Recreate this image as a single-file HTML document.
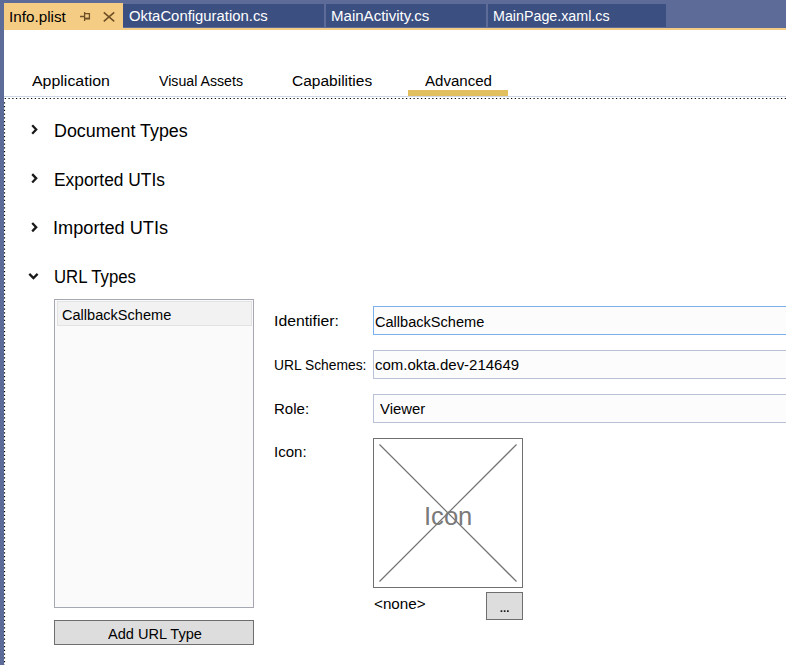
<!DOCTYPE html>
<html><head><meta charset="utf-8">
<style>
html,body{margin:0;padding:0;}
body{width:786px;height:665px;overflow:hidden;position:relative;background:#fff;font-family:"Liberation Sans",sans-serif;color:#000;}
.a{position:absolute;}
.t{position:absolute;white-space:pre;line-height:1;transform-origin:0 0;}
</style></head><body>
<!-- frame -->
<div class="a" style="left:0;top:0;width:786px;height:28px;background:#5d6b99"></div>
<div class="a" style="left:0;top:0;width:4px;height:665px;background:#5d6b99"></div>
<!-- tabs -->
<div class="a" style="left:4px;top:3px;width:119px;height:27px;background:#f5cc84"></div>
<div class="a" style="left:123px;top:4px;width:201px;height:23px;background:#3c4f81"></div>
<div class="a" style="left:326px;top:4px;width:160px;height:23px;background:#3c4f81"></div>
<div class="a" style="left:488px;top:4px;width:178px;height:23px;background:#3c4f81"></div>
<div class="a" style="left:4px;top:28px;width:782px;height:2px;background:#f5cc84"></div>
<div class="t" style="left:9.02px;top:8.83px;font-size:15.5px;transform:scaleX(0.9834)">Info.plist</div>
<svg class="a" style="left:0;top:0" width="120" height="30" viewBox="0 0 120 30">
  <path d="M80 16.5H84.5M84.6 12V21M84.6 13.6H89.4V18.6H84.6" fill="none" stroke="#6f4f25" stroke-width="1.3"/>
  <rect x="84.6" y="17.6" width="5.4" height="1.8" fill="#6f4f25"/>
</svg>
<svg class="a" style="left:0;top:0" width="120" height="30" viewBox="0 0 120 30">
  <path d="M103.8 12.4L114.2 21.4M114.2 12.4L103.8 21.4" fill="none" stroke="#6f4f25" stroke-width="1.6"/>
</svg>
<div class="t" style="left:129.04px;top:7.83px;font-size:15.5px;transform:scaleX(0.9589);color:#fff">OktaConfiguration.cs</div>
<div class="t" style="left:331.03px;top:7.83px;font-size:15.5px;transform:scaleX(0.9707);color:#fff">MainActivity.cs</div>
<div class="t" style="left:493.08px;top:7.83px;font-size:15.5px;transform:scaleX(0.9208);color:#fff">MainPage.xaml.cs</div>
<!-- sub tabs -->
<div class="t" style="left:32.00px;top:72.83px;font-size:15.5px;transform:scaleX(1.0272)">Application</div>
<div class="t" style="left:159.00px;top:72.83px;font-size:15.5px;transform:scaleX(0.9138)">Visual Assets</div>
<div class="t" style="left:292.00px;top:72.83px;font-size:15.5px;transform:scaleX(1.0005)">Capabilities</div>
<div class="t" style="left:425.00px;top:72.83px;font-size:15.5px;transform:scaleX(0.9713)">Advanced</div>
<div class="a" style="left:408px;top:90px;width:100px;height:6px;background:#e2c060"></div>
<div class="a" style="left:4px;top:96px;width:782px;height:1px;background:#cdd5e6"></div>
<svg class="a" style="left:0;top:0" width="786" height="665"><path fill="#000" d="M4.75 98h1.2v1.1h-1.2zM8.50 98h1.2v1.1h-1.2zM12.25 98h1.2v1.1h-1.2zM16.00 98h1.2v1.1h-1.2zM19.75 98h1.2v1.1h-1.2zM23.50 98h1.2v1.1h-1.2zM27.25 98h1.2v1.1h-1.2zM31.00 98h1.2v1.1h-1.2zM34.75 98h1.2v1.1h-1.2zM38.50 98h1.2v1.1h-1.2zM42.25 98h1.2v1.1h-1.2zM46.00 98h1.2v1.1h-1.2zM49.75 98h1.2v1.1h-1.2zM53.50 98h1.2v1.1h-1.2zM57.25 98h1.2v1.1h-1.2zM61.00 98h1.2v1.1h-1.2zM64.75 98h1.2v1.1h-1.2zM68.50 98h1.2v1.1h-1.2zM72.25 98h1.2v1.1h-1.2zM76.00 98h1.2v1.1h-1.2zM79.75 98h1.2v1.1h-1.2zM83.50 98h1.2v1.1h-1.2zM87.25 98h1.2v1.1h-1.2zM91.00 98h1.2v1.1h-1.2zM94.75 98h1.2v1.1h-1.2zM98.50 98h1.2v1.1h-1.2zM102.25 98h1.2v1.1h-1.2zM106.00 98h1.2v1.1h-1.2zM109.75 98h1.2v1.1h-1.2zM113.50 98h1.2v1.1h-1.2zM117.25 98h1.2v1.1h-1.2zM121.00 98h1.2v1.1h-1.2zM124.75 98h1.2v1.1h-1.2zM128.50 98h1.2v1.1h-1.2zM132.25 98h1.2v1.1h-1.2zM136.00 98h1.2v1.1h-1.2zM139.75 98h1.2v1.1h-1.2zM143.50 98h1.2v1.1h-1.2zM147.25 98h1.2v1.1h-1.2zM151.00 98h1.2v1.1h-1.2zM154.75 98h1.2v1.1h-1.2zM158.50 98h1.2v1.1h-1.2zM162.25 98h1.2v1.1h-1.2zM166.00 98h1.2v1.1h-1.2zM169.75 98h1.2v1.1h-1.2zM173.50 98h1.2v1.1h-1.2zM177.25 98h1.2v1.1h-1.2zM181.00 98h1.2v1.1h-1.2zM184.75 98h1.2v1.1h-1.2zM188.50 98h1.2v1.1h-1.2zM192.25 98h1.2v1.1h-1.2zM196.00 98h1.2v1.1h-1.2zM199.75 98h1.2v1.1h-1.2zM203.50 98h1.2v1.1h-1.2zM207.25 98h1.2v1.1h-1.2zM211.00 98h1.2v1.1h-1.2zM214.75 98h1.2v1.1h-1.2zM218.50 98h1.2v1.1h-1.2zM222.25 98h1.2v1.1h-1.2zM226.00 98h1.2v1.1h-1.2zM229.75 98h1.2v1.1h-1.2zM233.50 98h1.2v1.1h-1.2zM237.25 98h1.2v1.1h-1.2zM241.00 98h1.2v1.1h-1.2zM244.75 98h1.2v1.1h-1.2zM248.50 98h1.2v1.1h-1.2zM252.25 98h1.2v1.1h-1.2zM256.00 98h1.2v1.1h-1.2zM259.75 98h1.2v1.1h-1.2zM263.50 98h1.2v1.1h-1.2zM267.25 98h1.2v1.1h-1.2zM271.00 98h1.2v1.1h-1.2zM274.75 98h1.2v1.1h-1.2zM278.50 98h1.2v1.1h-1.2zM282.25 98h1.2v1.1h-1.2zM286.00 98h1.2v1.1h-1.2zM289.75 98h1.2v1.1h-1.2zM293.50 98h1.2v1.1h-1.2zM297.25 98h1.2v1.1h-1.2zM301.00 98h1.2v1.1h-1.2zM304.75 98h1.2v1.1h-1.2zM308.50 98h1.2v1.1h-1.2zM312.25 98h1.2v1.1h-1.2zM316.00 98h1.2v1.1h-1.2zM319.75 98h1.2v1.1h-1.2zM323.50 98h1.2v1.1h-1.2zM327.25 98h1.2v1.1h-1.2zM331.00 98h1.2v1.1h-1.2zM334.75 98h1.2v1.1h-1.2zM338.50 98h1.2v1.1h-1.2zM342.25 98h1.2v1.1h-1.2zM346.00 98h1.2v1.1h-1.2zM349.75 98h1.2v1.1h-1.2zM353.50 98h1.2v1.1h-1.2zM357.25 98h1.2v1.1h-1.2zM361.00 98h1.2v1.1h-1.2zM364.75 98h1.2v1.1h-1.2zM368.50 98h1.2v1.1h-1.2zM372.25 98h1.2v1.1h-1.2zM376.00 98h1.2v1.1h-1.2zM379.75 98h1.2v1.1h-1.2zM383.50 98h1.2v1.1h-1.2zM387.25 98h1.2v1.1h-1.2zM391.00 98h1.2v1.1h-1.2zM394.75 98h1.2v1.1h-1.2zM398.50 98h1.2v1.1h-1.2zM402.25 98h1.2v1.1h-1.2zM406.00 98h1.2v1.1h-1.2zM409.75 98h1.2v1.1h-1.2zM413.50 98h1.2v1.1h-1.2zM417.25 98h1.2v1.1h-1.2zM421.00 98h1.2v1.1h-1.2zM424.75 98h1.2v1.1h-1.2zM428.50 98h1.2v1.1h-1.2zM432.25 98h1.2v1.1h-1.2zM436.00 98h1.2v1.1h-1.2zM439.75 98h1.2v1.1h-1.2zM443.50 98h1.2v1.1h-1.2zM447.25 98h1.2v1.1h-1.2zM451.00 98h1.2v1.1h-1.2zM454.75 98h1.2v1.1h-1.2zM458.50 98h1.2v1.1h-1.2zM462.25 98h1.2v1.1h-1.2zM466.00 98h1.2v1.1h-1.2zM469.75 98h1.2v1.1h-1.2zM473.50 98h1.2v1.1h-1.2zM477.25 98h1.2v1.1h-1.2zM481.00 98h1.2v1.1h-1.2zM484.75 98h1.2v1.1h-1.2zM488.50 98h1.2v1.1h-1.2zM492.25 98h1.2v1.1h-1.2zM496.00 98h1.2v1.1h-1.2zM499.75 98h1.2v1.1h-1.2zM503.50 98h1.2v1.1h-1.2zM507.25 98h1.2v1.1h-1.2zM511.00 98h1.2v1.1h-1.2zM514.75 98h1.2v1.1h-1.2zM518.50 98h1.2v1.1h-1.2zM522.25 98h1.2v1.1h-1.2zM526.00 98h1.2v1.1h-1.2zM529.75 98h1.2v1.1h-1.2zM533.50 98h1.2v1.1h-1.2zM537.25 98h1.2v1.1h-1.2zM541.00 98h1.2v1.1h-1.2zM544.75 98h1.2v1.1h-1.2zM548.50 98h1.2v1.1h-1.2zM552.25 98h1.2v1.1h-1.2zM556.00 98h1.2v1.1h-1.2zM559.75 98h1.2v1.1h-1.2zM563.50 98h1.2v1.1h-1.2zM567.25 98h1.2v1.1h-1.2zM571.00 98h1.2v1.1h-1.2zM574.75 98h1.2v1.1h-1.2zM578.50 98h1.2v1.1h-1.2zM582.25 98h1.2v1.1h-1.2zM586.00 98h1.2v1.1h-1.2zM589.75 98h1.2v1.1h-1.2zM593.50 98h1.2v1.1h-1.2zM597.25 98h1.2v1.1h-1.2zM601.00 98h1.2v1.1h-1.2zM604.75 98h1.2v1.1h-1.2zM608.50 98h1.2v1.1h-1.2zM612.25 98h1.2v1.1h-1.2zM616.00 98h1.2v1.1h-1.2zM619.75 98h1.2v1.1h-1.2zM623.50 98h1.2v1.1h-1.2zM627.25 98h1.2v1.1h-1.2zM631.00 98h1.2v1.1h-1.2zM634.75 98h1.2v1.1h-1.2zM638.50 98h1.2v1.1h-1.2zM642.25 98h1.2v1.1h-1.2zM646.00 98h1.2v1.1h-1.2zM649.75 98h1.2v1.1h-1.2zM653.50 98h1.2v1.1h-1.2zM657.25 98h1.2v1.1h-1.2zM661.00 98h1.2v1.1h-1.2zM664.75 98h1.2v1.1h-1.2zM668.50 98h1.2v1.1h-1.2zM672.25 98h1.2v1.1h-1.2zM676.00 98h1.2v1.1h-1.2zM679.75 98h1.2v1.1h-1.2zM683.50 98h1.2v1.1h-1.2zM687.25 98h1.2v1.1h-1.2zM691.00 98h1.2v1.1h-1.2zM694.75 98h1.2v1.1h-1.2zM698.50 98h1.2v1.1h-1.2zM702.25 98h1.2v1.1h-1.2zM706.00 98h1.2v1.1h-1.2zM709.75 98h1.2v1.1h-1.2zM713.50 98h1.2v1.1h-1.2zM717.25 98h1.2v1.1h-1.2zM721.00 98h1.2v1.1h-1.2zM724.75 98h1.2v1.1h-1.2zM728.50 98h1.2v1.1h-1.2zM732.25 98h1.2v1.1h-1.2zM736.00 98h1.2v1.1h-1.2zM739.75 98h1.2v1.1h-1.2zM743.50 98h1.2v1.1h-1.2zM747.25 98h1.2v1.1h-1.2zM751.00 98h1.2v1.1h-1.2zM754.75 98h1.2v1.1h-1.2zM758.50 98h1.2v1.1h-1.2zM762.25 98h1.2v1.1h-1.2zM766.00 98h1.2v1.1h-1.2zM769.75 98h1.2v1.1h-1.2zM773.50 98h1.2v1.1h-1.2zM777.25 98h1.2v1.1h-1.2zM781.00 98h1.2v1.1h-1.2zM784.75 98h1.2v1.1h-1.2zM4 102.35h1.1v1.2h-1.1zM4 106.10h1.1v1.2h-1.1zM4 109.85h1.1v1.2h-1.1zM4 113.60h1.1v1.2h-1.1zM4 117.35h1.1v1.2h-1.1zM4 121.10h1.1v1.2h-1.1zM4 124.85h1.1v1.2h-1.1zM4 128.60h1.1v1.2h-1.1zM4 132.35h1.1v1.2h-1.1zM4 136.10h1.1v1.2h-1.1zM4 139.85h1.1v1.2h-1.1zM4 143.60h1.1v1.2h-1.1zM4 147.35h1.1v1.2h-1.1zM4 151.10h1.1v1.2h-1.1zM4 154.85h1.1v1.2h-1.1zM4 158.60h1.1v1.2h-1.1zM4 162.35h1.1v1.2h-1.1zM4 166.10h1.1v1.2h-1.1zM4 169.85h1.1v1.2h-1.1zM4 173.60h1.1v1.2h-1.1zM4 177.35h1.1v1.2h-1.1zM4 181.10h1.1v1.2h-1.1zM4 184.85h1.1v1.2h-1.1zM4 188.60h1.1v1.2h-1.1zM4 192.35h1.1v1.2h-1.1zM4 196.10h1.1v1.2h-1.1zM4 199.85h1.1v1.2h-1.1zM4 203.60h1.1v1.2h-1.1zM4 207.35h1.1v1.2h-1.1zM4 211.10h1.1v1.2h-1.1zM4 214.85h1.1v1.2h-1.1zM4 218.60h1.1v1.2h-1.1zM4 222.35h1.1v1.2h-1.1zM4 226.10h1.1v1.2h-1.1zM4 229.85h1.1v1.2h-1.1zM4 233.60h1.1v1.2h-1.1zM4 237.35h1.1v1.2h-1.1zM4 241.10h1.1v1.2h-1.1zM4 244.85h1.1v1.2h-1.1zM4 248.60h1.1v1.2h-1.1zM4 252.35h1.1v1.2h-1.1zM4 256.10h1.1v1.2h-1.1zM4 259.85h1.1v1.2h-1.1zM4 263.60h1.1v1.2h-1.1zM4 267.35h1.1v1.2h-1.1zM4 271.10h1.1v1.2h-1.1zM4 274.85h1.1v1.2h-1.1zM4 278.60h1.1v1.2h-1.1zM4 282.35h1.1v1.2h-1.1zM4 286.10h1.1v1.2h-1.1zM4 289.85h1.1v1.2h-1.1zM4 293.60h1.1v1.2h-1.1zM4 297.35h1.1v1.2h-1.1zM4 301.10h1.1v1.2h-1.1zM4 304.85h1.1v1.2h-1.1zM4 308.60h1.1v1.2h-1.1zM4 312.35h1.1v1.2h-1.1zM4 316.10h1.1v1.2h-1.1zM4 319.85h1.1v1.2h-1.1zM4 323.60h1.1v1.2h-1.1zM4 327.35h1.1v1.2h-1.1zM4 331.10h1.1v1.2h-1.1zM4 334.85h1.1v1.2h-1.1zM4 338.60h1.1v1.2h-1.1zM4 342.35h1.1v1.2h-1.1zM4 346.10h1.1v1.2h-1.1zM4 349.85h1.1v1.2h-1.1zM4 353.60h1.1v1.2h-1.1zM4 357.35h1.1v1.2h-1.1zM4 361.10h1.1v1.2h-1.1zM4 364.85h1.1v1.2h-1.1zM4 368.60h1.1v1.2h-1.1zM4 372.35h1.1v1.2h-1.1zM4 376.10h1.1v1.2h-1.1zM4 379.85h1.1v1.2h-1.1zM4 383.60h1.1v1.2h-1.1zM4 387.35h1.1v1.2h-1.1zM4 391.10h1.1v1.2h-1.1zM4 394.85h1.1v1.2h-1.1zM4 398.60h1.1v1.2h-1.1zM4 402.35h1.1v1.2h-1.1zM4 406.10h1.1v1.2h-1.1zM4 409.85h1.1v1.2h-1.1zM4 413.60h1.1v1.2h-1.1zM4 417.35h1.1v1.2h-1.1zM4 421.10h1.1v1.2h-1.1zM4 424.85h1.1v1.2h-1.1zM4 428.60h1.1v1.2h-1.1zM4 432.35h1.1v1.2h-1.1zM4 436.10h1.1v1.2h-1.1zM4 439.85h1.1v1.2h-1.1zM4 443.60h1.1v1.2h-1.1zM4 447.35h1.1v1.2h-1.1zM4 451.10h1.1v1.2h-1.1zM4 454.85h1.1v1.2h-1.1zM4 458.60h1.1v1.2h-1.1zM4 462.35h1.1v1.2h-1.1zM4 466.10h1.1v1.2h-1.1zM4 469.85h1.1v1.2h-1.1zM4 473.60h1.1v1.2h-1.1zM4 477.35h1.1v1.2h-1.1zM4 481.10h1.1v1.2h-1.1zM4 484.85h1.1v1.2h-1.1zM4 488.60h1.1v1.2h-1.1zM4 492.35h1.1v1.2h-1.1zM4 496.10h1.1v1.2h-1.1zM4 499.85h1.1v1.2h-1.1zM4 503.60h1.1v1.2h-1.1zM4 507.35h1.1v1.2h-1.1zM4 511.10h1.1v1.2h-1.1zM4 514.85h1.1v1.2h-1.1zM4 518.60h1.1v1.2h-1.1zM4 522.35h1.1v1.2h-1.1zM4 526.10h1.1v1.2h-1.1zM4 529.85h1.1v1.2h-1.1zM4 533.60h1.1v1.2h-1.1zM4 537.35h1.1v1.2h-1.1zM4 541.10h1.1v1.2h-1.1zM4 544.85h1.1v1.2h-1.1zM4 548.60h1.1v1.2h-1.1zM4 552.35h1.1v1.2h-1.1zM4 556.10h1.1v1.2h-1.1zM4 559.85h1.1v1.2h-1.1zM4 563.60h1.1v1.2h-1.1zM4 567.35h1.1v1.2h-1.1zM4 571.10h1.1v1.2h-1.1zM4 574.85h1.1v1.2h-1.1zM4 578.60h1.1v1.2h-1.1zM4 582.35h1.1v1.2h-1.1zM4 586.10h1.1v1.2h-1.1zM4 589.85h1.1v1.2h-1.1zM4 593.60h1.1v1.2h-1.1zM4 597.35h1.1v1.2h-1.1zM4 601.10h1.1v1.2h-1.1zM4 604.85h1.1v1.2h-1.1zM4 608.60h1.1v1.2h-1.1zM4 612.35h1.1v1.2h-1.1zM4 616.10h1.1v1.2h-1.1zM4 619.85h1.1v1.2h-1.1zM4 623.60h1.1v1.2h-1.1zM4 627.35h1.1v1.2h-1.1zM4 631.10h1.1v1.2h-1.1zM4 634.85h1.1v1.2h-1.1zM4 638.60h1.1v1.2h-1.1zM4 642.35h1.1v1.2h-1.1zM4 646.10h1.1v1.2h-1.1zM4 649.85h1.1v1.2h-1.1zM4 653.60h1.1v1.2h-1.1zM4 657.35h1.1v1.2h-1.1zM4 661.10h1.1v1.2h-1.1zM4 664.85h1.1v1.2h-1.1z"/></svg>
<!-- expanders -->
<svg class="a" style="left:0;top:0" width="60" height="300"><path fill="none" stroke="#1a1a1a" stroke-width="2.3" d="M32.2 125.30L36.2 129.50L32.2 133.70M32.2 174.15L36.2 178.35L32.2 182.55M32.2 222.95L36.2 227.15L32.2 231.35M29.3 273.9L33.45 278.1L37.6 273.9"/></svg>
<div class="t" style="left:54.01px;top:121.70px;font-size:18px;transform:scaleX(0.9925)">Document Types</div>
<div class="t" style="left:54.04px;top:170.70px;font-size:18px;transform:scaleX(0.9646)">Exported UTIs</div>
<div class="t" style="left:52.98px;top:218.70px;font-size:18px;transform:scaleX(1.0091)">Imported UTIs</div>
<div class="t" style="left:54.07px;top:267.70px;font-size:18px;transform:scaleX(0.9302)">URL Types</div>
<!-- list -->
<div class="a" style="left:54px;top:299px;width:198px;height:307px;border:1px solid #a5a8b2;background:#fafafa"></div>
<div class="a" style="left:57px;top:301px;width:193px;height:23px;border:1px solid #e2e2e2;background:#f2f2f2"></div>
<div class="t" style="left:62.06px;top:306.82px;font-size:15.5px;transform:scaleX(0.9397)">CallbackScheme</div>
<div class="a" style="left:54px;top:620px;width:198px;height:23px;border:1px solid #6e6e6e;background:#dddddd"></div>
<div class="t" style="left:108.00px;top:625.83px;font-size:15.5px;transform:scaleX(0.9401)">Add URL Type</div>
<!-- form -->
<div class="t" style="left:273.98px;top:312.82px;font-size:15.5px;transform:scaleX(1.0166)">Identifier:</div>
<div class="a" style="left:373px;top:306px;width:420px;height:27px;border:1px solid #7cb0ea;background:#fcfcfc"></div>
<div class="t" style="left:375.06px;top:313.82px;font-size:15.5px;transform:scaleX(0.9397)">CallbackScheme</div>
<div class="t" style="left:274.11px;top:356.82px;font-size:15.5px;transform:scaleX(0.8919)">URL Schemes:</div>
<div class="a" style="left:373px;top:350px;width:420px;height:27px;border:1px solid #b9c1d6;background:#fcfcfc"></div>
<div class="t" style="left:375.03px;top:356.82px;font-size:15.5px;transform:scaleX(0.9668)">com.okta.dev-214649</div>
<div class="t" style="left:274.03px;top:400.82px;font-size:15.5px;transform:scaleX(0.9715)">Role:</div>
<div class="a" style="left:373px;top:394px;width:420px;height:27px;border:1px solid #b9c1d6;background:#fcfcfc"></div>
<div class="t" style="left:380.00px;top:400.82px;font-size:15.5px;transform:scaleX(0.9579)">Viewer</div>
<div class="t" style="left:274.03px;top:443.82px;font-size:15.5px;transform:scaleX(0.9688)">Icon:</div>
<div class="a" style="left:373px;top:438px;width:148px;height:148px;border:1px solid #707070;background:#fff"></div>
<svg class="a" style="left:373px;top:438px" width="150" height="150" viewBox="0 0 150 150">
  <path d="M6.5 6.5L143.5 143.5M143.5 6.5L6.5 143.5" stroke="#747474" stroke-width="1.25" fill="none"/>
</svg>
<div class="t" style="left:423.95px;top:503.75px;font-size:25px;transform:scaleX(1.0227);color:#7a7a7a">Icon</div>
<div class="t" style="left:374.02px;top:595.83px;font-size:15.5px;transform:scaleX(0.9819)">&lt;none&gt;</div>
<div class="a" style="left:486px;top:592px;width:35px;height:26px;border:1px solid #6e6e6e;background:#dddddd"></div>
<svg class="a" style="left:0;top:0" width="786" height="665"><path fill="#1e1e1e" d="M500.6 610.2h1.7v1.8h-1.7zM503.8 610.2h1.7v1.8h-1.7zM507 610.2h1.7v1.8h-1.7z"/></svg>
</body></html>
